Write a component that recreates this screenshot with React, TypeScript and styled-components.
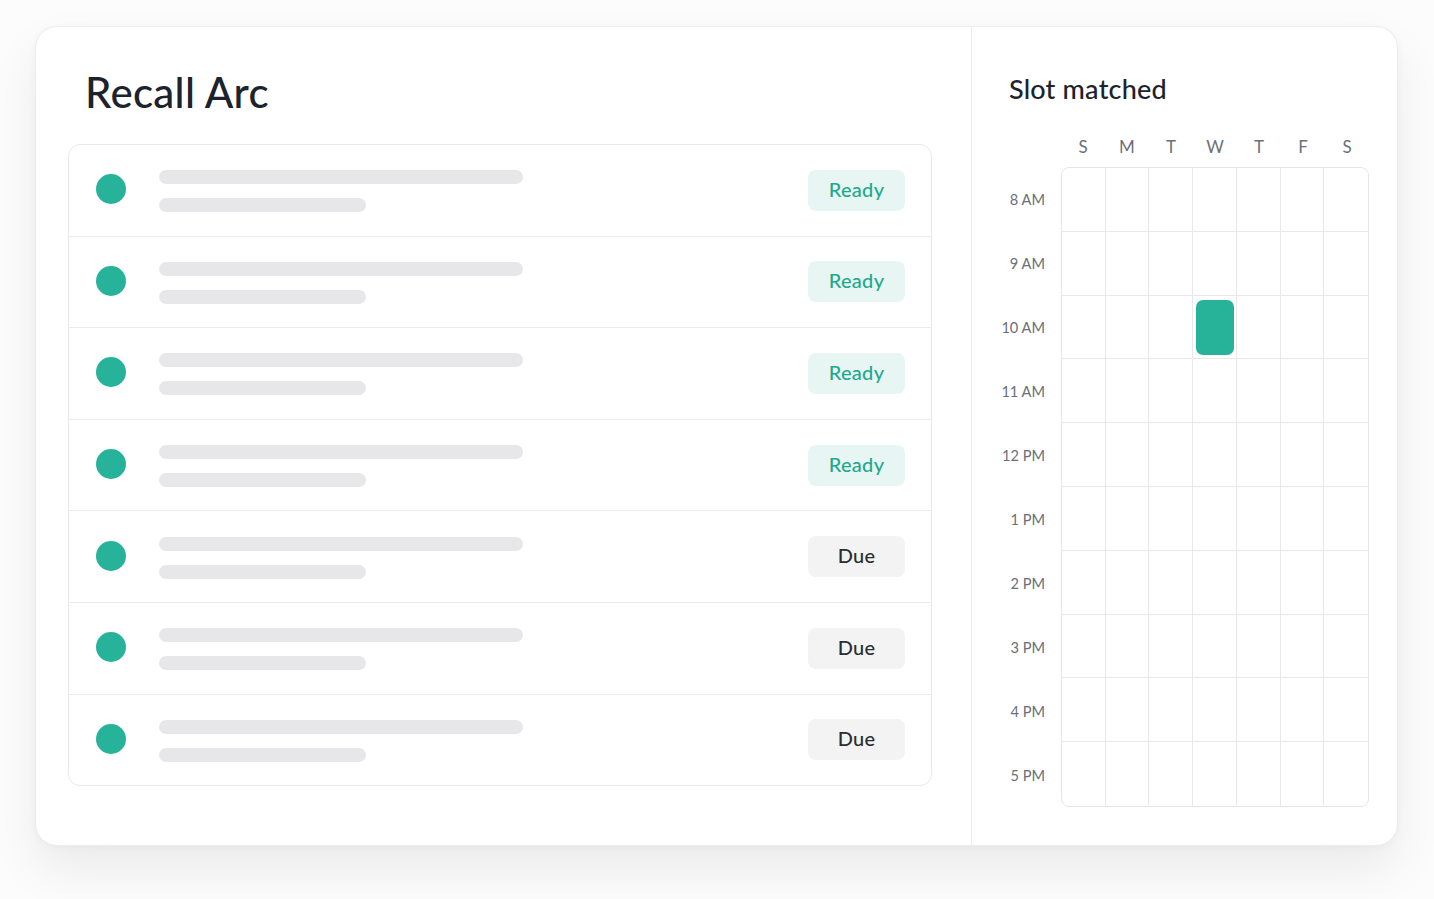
import * as React from 'react'
import styled, { createGlobalStyle } from 'styled-components'

const teal = '#27b39a'

const rows = [
  { status: 'Ready' },
  { status: 'Ready' },
  { status: 'Ready' },
  { status: 'Ready' },
  { status: 'Due' },
  { status: 'Due' },
  { status: 'Due' }
]

const days = ['S', 'M', 'T', 'W', 'T', 'F', 'S']
const hours = ['8 AM', '9 AM', '10 AM', '11 AM', '12 PM', '1 PM', '2 PM', '3 PM', '4 PM', '5 PM']

// booked slot: Wednesday, 10 AM
const slot = { day: 3, hour: 2 }

const App = () => {
  return (
    <Page>
      <GlobalStyle />
      <Card>
        <ListPanel>
          <Title>Recall Arc</Title>
          <List>
            {rows.map((r, i) => (
              <Row key={i}>
                <Dot />
                <Lines>
                  <Bar w={364} />
                  <Bar w={207} />
                </Lines>
                <Badge ready={r.status === 'Ready'}>{r.status}</Badge>
              </Row>
            ))}
          </List>
        </ListPanel>
        <CalendarPanel>
          <SubTitle>Slot matched</SubTitle>
          <DayRow>
            <Spacer />
            <DayGrid>
              {days.map((d, i) => (
                <Day key={i}>{d}</Day>
              ))}
            </DayGrid>
          </DayRow>
          <CalBody>
            <Hours>
              {hours.map(h => (
                <Hour key={h}>{h}</Hour>
              ))}
            </Hours>
            <Grid>
              {hours.map((h, r) =>
                days.map((d, c) => (
                  <Cell key={h + c} lastCol={c === 6} lastRow={r === hours.length - 1}>
                    {r === slot.hour && c === slot.day ? <Booked /> : null}
                  </Cell>
                ))
              )}
            </Grid>
          </CalBody>
        </CalendarPanel>
      </Card>
    </Page>
  )
}

const GlobalStyle = createGlobalStyle`
  html, body {
    margin: 0;
    background: #fcfcfc;
    font-family: Lato, "Noto Sans", "Liberation Sans", sans-serif;
  }
`

const Page = styled.div`
  width: 1434px;
  height: 899px;
  padding: 26px 0 0 35px;
  box-sizing: border-box;
`

const Card = styled.div`
  width: 1363px;
  height: 820px;
  box-sizing: border-box;
  display: flex;
  background: #fff;
  border: 1px solid #ececec;
  border-radius: 22px;
  box-shadow: 0 24px 50px rgba(0, 0, 0, 0.07), 0 2px 8px rgba(0, 0, 0, 0.03);
  overflow: hidden;
`

const ListPanel = styled.div`
  width: 936px;
  box-sizing: border-box;
  padding: 41px 39px 0 32px;
  border-right: 1px solid #ececec;
`

const Title = styled.h1`
  margin: 0 0 28px 17px;
  font-size: 42px;
  line-height: 48px;
  font-weight: 500;
  color: #1c232c;
  letter-spacing: 0.3px;
`

const List = styled.div`
  border: 1px solid #e8e8e8;
  border-radius: 12px;
  overflow: hidden;
`

const Row = styled.div`
  height: 90.6px;
  display: flex;
  align-items: center;
  padding: 0 26px 0 27px;
  & + & {
    border-top: 1px solid #ebebeb;
  }
`

const Dot = styled.div`
  width: 30px;
  height: 30px;
  border-radius: 50%;
  background: ${teal};
  flex-shrink: 0;
  margin-bottom: 2px;
`

const Lines = styled.div`
  flex: 1;
  display: flex;
  flex-direction: column;
  gap: 14px;
  margin-left: 33px;
  margin-top: 2px;
`

const Bar = styled.div<{ w: number }>`
  width: ${p => p.w}px;
  height: 14px;
  border-radius: 7px;
  background: #e7e7e9;
`

const Badge = styled.div<{ ready: boolean }>`
  width: 97px;
  height: 41px;
  box-sizing: border-box;
  padding-bottom: 3px;
  display: flex;
  align-items: center;
  justify-content: center;
  border-radius: 8px;
  font-size: 20px;
  font-weight: 500;
  letter-spacing: 0.3px;
  background: ${p => (p.ready ? '#e7f6f2' : '#f3f3f3')};
  color: ${p => (p.ready ? '#1fa98d' : '#2a2d31')};
`

const CalendarPanel = styled.div`
  flex: 1;
  padding: 46px 28px 0 37px;
`

const SubTitle = styled.h2`
  margin: 0 0 29px;
  font-size: 27px;
  line-height: 32px;
  font-weight: 500;
  color: #1c232c;
  letter-spacing: 0.2px;
`

const DayRow = styled.div`
  display: flex;
  height: 24px;
  margin-bottom: 9px;
`

const Spacer = styled.div`
  width: 52px;
  flex-shrink: 0;
`

const DayGrid = styled.div`
  flex: 1;
  display: grid;
  grid-template-columns: repeat(7, 1fr);
`

const Day = styled.div`
  text-align: center;
  font-size: 17px;
  line-height: 26px;
  color: #6b7078;
`

const CalBody = styled.div`
  display: flex;
`

const Hours = styled.div`
  width: 52px;
  flex-shrink: 0;
  padding: 0 16px 0 0;
  box-sizing: border-box;
  display: grid;
  grid-template-columns: minmax(0, 1fr);
  grid-template-rows: repeat(10, 64px);
`

const Hour = styled.div`
  min-width: 0;
  display: flex;
  align-items: center;
  justify-content: flex-end;
  font-size: 14.6px;
  color: #6b7078;
  white-space: nowrap;
  padding-top: 1px;
`

const Grid = styled.div`
  flex: 1;
  display: grid;
  grid-template-columns: repeat(7, 1fr);
  grid-template-rows: repeat(10, 63.8px);
  border: 1px solid #e6e6e6;
  border-radius: 8px;
  overflow: hidden;
`

const Cell = styled.div<{ lastCol: boolean; lastRow: boolean }>`
  position: relative;
  border-right: ${p => (p.lastCol ? 'none' : '1px solid #e8e8e8')};
  border-bottom: ${p => (p.lastRow ? 'none' : '1px solid #e8e8e8')};
`

const Booked = styled.div`
  position: absolute;
  inset: 4px 2px 3px 3px;
  border-radius: 7px;
  background: ${teal};
`

export default App
